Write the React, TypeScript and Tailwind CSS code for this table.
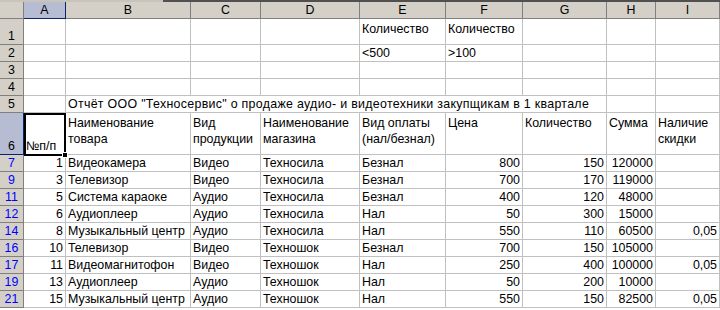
import clsx from 'clsx';

const cols = 'grid grid-cols-[24px_42px_125px_70px_99px_86px_77px_84px_49px_64px]';

const data: string[][] = [
    ['7', '1', 'Видеокамера', 'Видео', 'Техносила', 'Безнал', '800', '150', '120000', ''],
    ['9', '3', 'Телевизор', 'Видео', 'Техносила', 'Безнал', '700', '170', '119000', ''],
    ['11', '5', 'Система караоке', 'Аудио', 'Техносила', 'Безнал', '400', '120', '48000', ''],
    ['12', '6', 'Аудиоплеер', 'Аудио', 'Техносила', 'Нал', '50', '300', '15000', ''],
    ['14', '8', 'Музыкальный центр', 'Аудио', 'Техносила', 'Нал', '550', '110', '60500', '0,05'],
    ['16', '10', 'Телевизор', 'Видео', 'Техношок', 'Безнал', '700', '150', '105000', ''],
    ['17', '11', 'Видеомагнитофон', 'Видео', 'Техношок', 'Нал', '250', '400', '100000', '0,05'],
    ['19', '13', 'Аудиоплеер', 'Аудио', 'Техношок', 'Нал', '50', '200', '10000', ''],
    ['21', '15', 'Музыкальный центр', 'Аудио', 'Техношок', 'Нал', '550', '150', '82500', '0,05'],
];

// columns holding numbers (index after the row number)
const rightCols = [0, 5, 6, 7, 8];

function Cell({
    children,
    right,
    top,
    className,
}: {
    children?: React.ReactNode;
    right?: boolean;
    top?: boolean;
    className?: string;
}) {
    if (top) {
        return (
            <div className={clsx('border-r border-b border-[#c0c0c0] px-[2px] pt-[2px] leading-[16px]', className)}>
                {children}
            </div>
        );
    }
    return (
        <div
            className={clsx(
                'flex items-end whitespace-nowrap border-r border-b border-[#c0c0c0] px-[2px] leading-[16px]',
                right && 'justify-end',
                className
            )}>
            {children}
        </div>
    );
}

function RowHead({ children, blue, active }: { children: React.ReactNode; blue?: boolean; active?: boolean }) {
    return (
        <div
            className={clsx(
                'flex items-end justify-center border-r border-b leading-[16px]',
                active ? 'border-[#0a246a] bg-[#b6bdd2]' : 'border-[#808080] bg-[#d4d0c8]',
                blue ? 'text-[#0000ff]' : 'text-black'
            )}>
            {children}
        </div>
    );
}

export default function App() {
    const letters = ['A', 'B', 'C', 'D', 'E', 'F', 'G', 'H', 'I'];
    return (
        <div className="relative h-[310px] w-[720px] overflow-hidden bg-white font-['Liberation_Sans',Arial,sans-serif] text-[12.4px] text-black">
            <div className="flex h-[2px]">
                <div className="w-[163px] bg-[#c8c4bc]" />
                <div className="flex-1 bg-[#505050]" />
            </div>
            <div className={clsx(cols, 'h-[17px]')}>
                <div className="border-r border-b border-[#808080] bg-[#d4d0c8]" />
                {letters.map((l, i) => (
                    <div
                        key={l}
                        className={clsx(
                            'flex items-center justify-center border-r border-b leading-[16px]',
                            i === 0 ? 'border-[#0a246a] bg-[#b6bdd2]' : 'border-[#808080] bg-[#d4d0c8]'
                        )}>
                        {l}
                    </div>
                ))}
            </div>

            <div className={clsx(cols, 'h-[26px]')}>
                <RowHead>1</RowHead>
                <Cell />
                <Cell />
                <Cell />
                <Cell />
                <Cell top>Количество</Cell>
                <Cell top>Количество</Cell>
                <Cell />
                <Cell />
                <Cell />
            </div>
            <div className={clsx(cols, 'h-[17px]')}>
                <RowHead>2</RowHead>
                <Cell />
                <Cell />
                <Cell />
                <Cell />
                <Cell>{'<500'}</Cell>
                <Cell>{'>100'}</Cell>
                <Cell />
                <Cell />
                <Cell />
            </div>
            {['3', '4'].map((n) => (
                <div key={n} className={clsx(cols, 'h-[17px]')}>
                    <RowHead>{n}</RowHead>
                    {letters.map((l) => (
                        <Cell key={l} />
                    ))}
                </div>
            ))}
            <div className={clsx(cols, 'h-[17px]')}>
                <RowHead>5</RowHead>
                <Cell />
                <Cell className="col-span-6 tracking-[0.3px]">
                    Отчёт ООО "Техносервис" о продаже аудио- и видеотехники закупщикам в 1 квартале
                </Cell>
                <Cell />
                <Cell />
            </div>
            <div className={clsx(cols, 'h-[42px]')}>
                <RowHead active>6</RowHead>
                <Cell>№п/п</Cell>
                {[
                    'Наименование товара',
                    'Вид продукции',
                    'Наименование магазина',
                    'Вид оплаты (нал/безнал)',
                    'Цена',
                    'Количество',
                    'Сумма',
                    'Наличие скидки',
                ].map((t) => (
                    <Cell key={t} top>
                        {t}
                    </Cell>
                ))}
            </div>
            {data.map((r) => (
                <div key={r[0]} className={clsx(cols, 'h-[17px]')}>
                    <RowHead blue>{r[0]}</RowHead>
                    {r.slice(1).map((v, i) => (
                        <Cell key={i} right={rightCols.includes(i)}>
                            {v}
                        </Cell>
                    ))}
                </div>
            ))}

            <div className="absolute left-[24px] top-[113px] h-[43px] w-[42px] border-2 border-black" />
            <div className="absolute left-[62px] top-[152px] h-[6px] w-[6px] border border-white bg-black" />
        </div>
    );
}
